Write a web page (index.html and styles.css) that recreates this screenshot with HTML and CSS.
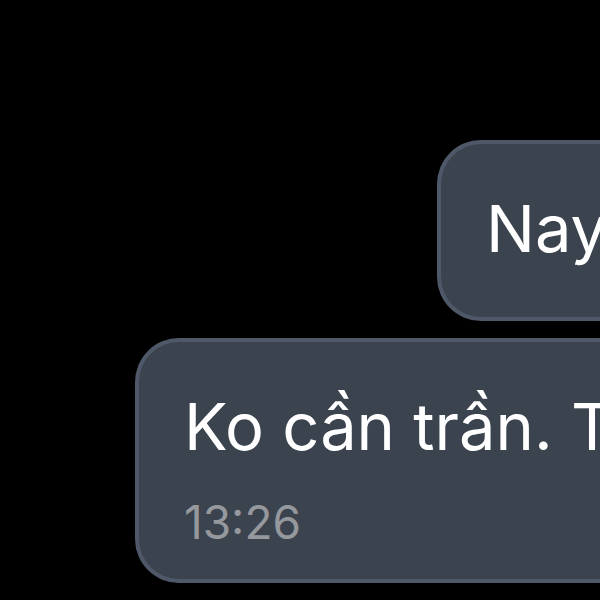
FILE: index.html
```html
<!DOCTYPE html>
<html lang="vi">
<head>
<meta charset="utf-8">
<title>Chat</title>
<link rel="stylesheet" href="styles.css">
</head>
<body>
<main class="chat">
  <article class="bubble bubble-short"><p class="text">Nay</p></article>
  <article class="bubble bubble-long"><p class="text">Ko cần trần. T</p><time class="time">13:26</time></article>
</main>
</body>
</html>
```
FILE: styles.css
```css
* { box-sizing: border-box; }
body { margin: 0; background: #000; overflow: hidden; }
.chat {
  display: flex;
  flex-direction: column;
  gap: 17px;
  padding-top: 140px;
  font-family: Inter, "Liberation Sans", sans-serif;
}
.bubble {
  border: 4px solid #4f5868;
  border-right: 0;
  border-radius: 44px 0 0 44px;
  background: #3b434f;
  padding: 44px 0 33px 45px;
  white-space: nowrap;
  overflow: hidden;
}
.bubble-short { margin-left: 437px; padding-bottom: 47px; }
.bubble-long { margin-left: 135px; }
.text { margin: 0; color: #fff; font-size: 65px; line-height: 82px; }
.time { display: block; margin-top: 30px; color: #95989d; font-size: 46px; line-height: 48px; }
```
